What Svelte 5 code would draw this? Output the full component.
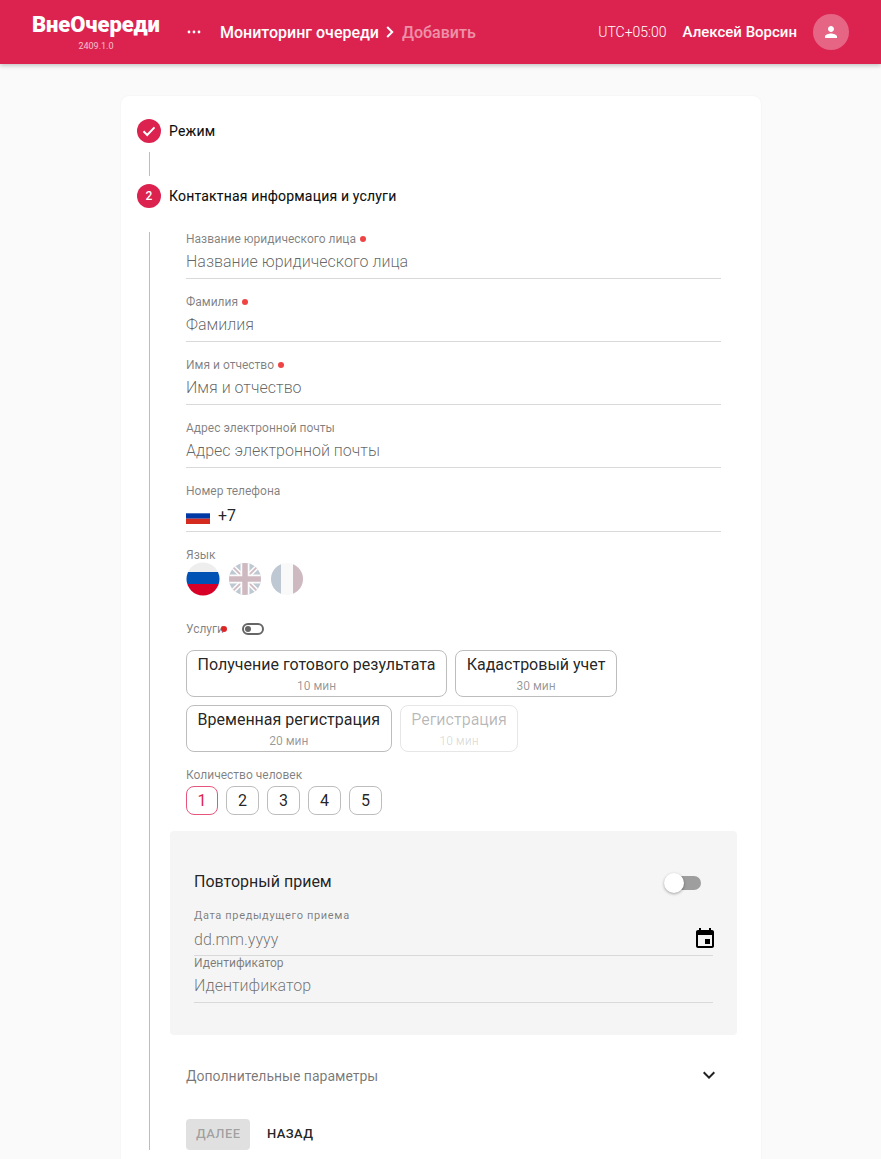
<script>
  const fields = [
    { label: 'Название юридического лица', required: true },
    { label: 'Фамилия', required: true },
    { label: 'Имя и отчество', required: true },
    { label: 'Адрес электронной почты', required: false },
  ];
  const services = [
    [
      { name: 'Получение готового результата', time: '10 мин' },
      { name: 'Кадастровый учет', time: '30 мин' },
    ],
    [
      { name: 'Временная регистрация', time: '20 мин' },
      { name: 'Регистрация', time: '10 мин', disabled: true },
    ],
  ];
  const counts = [1, 2, 3, 4, 5];
</script>

<header class="topbar">
  <div class="brand">
    <div class="logo">ВнеОчереди</div>
    <div class="version">2409.1.0</div>
  </div>
  <span class="dots">
    <svg width="14" height="4" viewBox="0 0 14 4"><circle cx="2" cy="2" r="1.4" fill="#fff"/><circle cx="7" cy="2" r="1.4" fill="#fff"/><circle cx="12" cy="2" r="1.4" fill="#fff"/></svg>
  </span>
  <span class="crumb">Мониторинг очереди</span>
  <svg class="crumb-sep" width="8" height="12" viewBox="0 0 8 12" fill="none"><path d="M1.2 1 6.200 6l-5 5" stroke="#fff" stroke-width="2"/></svg>
  <span class="crumb crumb-dim">Добавить</span>
  <span class="spacer"></span>
  <span class="tz">UTC+05:00</span>
  <span class="user">Алексей Ворсин</span>
  <span class="avatar">
    <svg width="18" height="18" viewBox="0 0 24 24" fill="#fff"><path d="M12 12c2.200 0 4-1.800 4-4s-1.800-4-4-4-4 1.800-4 4 1.800 4 4 4zm0 2c-2.700 0-8 1.300-8 4v2h16v-2c0-2.700-5.300-4-8-4z"/></svg>
  </span>
</header>

<main class="page">
  <section class="card">
    <div class="step">
      <span class="bullet">
        <svg width="16" height="16" viewBox="0 0 16 16" fill="none"><path d="M2.500 8.300 6.200 12l7.300-7.600" stroke="#fff" stroke-width="2"/></svg>
      </span>
      <span class="step-title">Режим</span>
    </div>
    <div class="connector"></div>
    <div class="step">
      <span class="bullet">2</span>
      <span class="step-title">Контактная информация и услуги</span>
    </div>

    <div class="step-body">
      {#each fields as f}
        <div class="field">
          <div class="label">{f.label}{#if f.required}<i class="req"></i>{/if}</div>
          <div class="placeholder">{f.label}</div>
        </div>
      {/each}

      <div class="field phone-field">
        <div class="label">Номер телефона</div>
        <div class="phone">
          <svg width="24" height="16" viewBox="0 0 24 16"><rect width="24" height="5.300" fill="#fff"/><rect y="5.300" width="24" height="5.400" fill="#0039a6"/><rect y="10.700" width="24" height="5.300" fill="#d52b1e"/></svg>
          <span>+7</span>
        </div>
      </div>

      <div class="label lang-label">Язык</div>
      <div class="langs">
        <svg class="flag" width="34" height="34" viewBox="0 0 34 34">
          <clipPath id="c1"><circle cx="17" cy="17" r="16.500"/></clipPath>
          <g clip-path="url(#c1)"><rect width="34" height="34" fill="#eeeeee"/><rect y="10" width="34" height="12" fill="#0052b4"/><rect y="22" width="34" height="12" fill="#d80027"/></g>
        </svg>
        <svg class="flag dim" width="34" height="34" viewBox="0 0 34 34">
          <clipPath id="c2"><circle cx="17" cy="17" r="16"/></clipPath>
          <g clip-path="url(#c2)">
            <rect width="34" height="34" fill="#2a4b6c"/>
            <path d="M0 0 34 34M34 0 0 34" stroke="#f4f4f4" stroke-width="5"/>
            <path d="M0 0 34 34M34 0 0 34" stroke="#621c34" stroke-width="1.600"/>
            <path d="M17 0v34M0 17h34" stroke="#f4f4f4" stroke-width="9"/>
            <path d="M17 0v34M0 17h34" stroke="#621c34" stroke-width="5.500"/>
          </g>
        </svg>
        <svg class="flag dim" width="34" height="34" viewBox="0 0 34 34">
          <clipPath id="c3"><circle cx="17" cy="17" r="16"/></clipPath>
          <g clip-path="url(#c3)"><rect width="34" height="34" fill="#eee"/><rect width="11" height="34" fill="#2a4b6c"/><rect x="23" width="11" height="34" fill="#621c34"/></g>
        </svg>
      </div>

      <div class="services-head">
        <span class="label services-label">Услуги<i class="req tight"></i></span>
        <span class="mini-toggle"><i></i></span>
      </div>

      {#each services as row}
        <div class="chips">
          {#each row as s}
            <div class="chip" class:disabled={s.disabled}>
              <div class="chip-name">{s.name}</div>
              <div class="chip-time">{s.time}</div>
            </div>
          {/each}
        </div>
      {/each}

      <div class="label count-label">Количество человек</div>
      <div class="counts">
        {#each counts as n}
          <span class="count" class:active={n === 1}>{n}</span>
        {/each}
      </div>

      <div class="panel">
        <div class="panel-row">
          <span class="panel-title">Повторный прием</span>
          <span class="switch"><i></i></span>
        </div>
        <div class="panel-field">
          <div class="label">Дата предыдущего приема</div>
          <div class="date-row">
            <span class="placeholder-text">dd.mm.yyyy</span>
            <svg class="cal" width="24" height="24" viewBox="0 0 24 24" fill="#000"><path d="M17 12h-5v5h5v-5zM16 1v2H8V1H6v2H5c-1.100 0-2 .9-2 2v14c0 1.100.9 2 2 2h14c1.100 0 2-.9 2-2V5c0-1.100-.9-2-2-2h-1V1h-2zm3 18H5V8h14v11z"/></svg>
          </div>
        </div>
        <div class="panel-field id-field">
          <div class="label">Идентификатор</div>
          <div class="placeholder-text id-text">Идентификатор</div>
        </div>
      </div>

      <div class="more">
        <span>Дополнительные параметры</span>
        <svg width="24" height="24" viewBox="0 0 24 24" fill="#212121"><path d="M7.400 7.600 12 12.200l4.600-4.600L18 9l-6 6-6-6z"/></svg>
      </div>

      <div class="actions">
        <button class="btn btn-next" disabled>Далее</button>
        <button class="btn btn-back">Назад</button>
      </div>
    </div>
  </section>
</main>

<style>
  :global(body) {
    background: #fafafa;
    font-family: Roboto, "Noto Sans", sans-serif;
    overflow: hidden;
  }

  .topbar {
    height: 64px;
    box-sizing: border-box;
    background: #dc2350;
    color: #fff;
    display: flex;
    align-items: center;
    padding: 0 32px;
    box-shadow: 0 2px 4px rgba(0, 0, 0, 0.2);
    position: relative;
  }

  .brand {
    width: 128px;
    text-align: center;
    margin-right: 27px;
    padding-top: 1px;
  }

  .logo {
    font-size: 22px;
    font-weight: 900;
    line-height: 24px;
    letter-spacing: -0.1px;
    text-align: left;
  }

  .version {
    font-size: 9px;
    line-height: 11px;
    margin-top: 4px;
    opacity: 0.7;
  }

  .dots {
    display: flex;
    margin-right: 19px;
  }

  .crumb {
    font-size: 16px;
    font-weight: 500;
  }

  .crumb-sep {
    margin: 0 8px 0 7px;
  }

  .crumb-dim {
    opacity: 0.5;
  }

  .spacer {
    flex: 1;
  }

  .tz {
    font-size: 14px;
    font-weight: 300;
    margin-right: 16px;
  }

  .user {
    font-size: 15px;
    font-weight: 500;
    margin-right: 16px;
  }

  .avatar {
    width: 36px;
    height: 36px;
    border-radius: 50%;
    background: rgba(255, 255, 255, 0.3);
    display: flex;
    align-items: center;
    justify-content: center;
  }

  .page {
    padding: 32px 120px 0 121px;
  }

  .card {
    background: #fff;
    border-radius: 8px;
    padding: 23px 16px 0;
    box-shadow: 0 0 2px rgba(0, 0, 0, 0.06);
    height: 1100px;
    box-sizing: border-box;
  }

  .step {
    display: flex;
    align-items: center;
    gap: 8px;
    height: 24px;
  }

  .bullet {
    width: 24px;
    height: 24px;
    border-radius: 50%;
    background: #dc2350;
    color: #fff;
    font-size: 12px;
    font-weight: 500;
    display: flex;
    align-items: center;
    justify-content: center;
  }

  .step-title {
    font-size: 14px;
    font-weight: 400;
    letter-spacing: 0.18px;
    color: rgba(0, 0, 0, 0.95);
    -webkit-text-stroke: 0.2px rgba(0, 0, 0, 0.6);
  }

  .connector {
    width: 1px;
    height: 24px;
    margin: 9px 0 8px 12px;
    background: #bdbdbd;
  }

  .step-body {
    margin: 24px 0 0 12px;
    padding: 0 24px 9px 36px;
    border-left: 1px solid #bdbdbd;
    height: 918px;
    box-sizing: border-box;
  }

  .field {
    height: 46px;
    margin-bottom: 16px;
    border-bottom: 1px solid #d9d9d9;
    box-sizing: content-box;
    margin-top: 0;
  }

  .phone-field {
    height: 47px;
  }

  .label {
    font-size: 12px;
    line-height: 14px;
    color: rgba(0, 0, 0, 0.5);
    display: flex;
    align-items: center;
  }

  .req {
    width: 6px;
    height: 6px;
    border-radius: 50%;
    background: #ef4444;
    margin-left: 4px;
  }

  .placeholder {
    font-size: 16px;
    font-weight: 300;
    line-height: 24px;
    margin-top: 4px;
    color: rgba(0, 0, 0, 0.62);
  }

  .phone {
    display: flex;
    align-items: center;
    gap: 8px;
    font-size: 16px;
    line-height: 24px;
    margin-top: 6px;
    font-weight: 400;
    color: rgba(0, 0, 0, 0.87);
  }

  .lang-label {
    margin-top: 1px;
  }

  .langs {
    display: flex;
    gap: 8px;
    margin-top: 0;
  }

  .flag {
    display: block;
  }

  .flag.dim {
    opacity: 0.3;
  }

  .services-head {
    display: flex;
    align-items: center;
    margin-top: 21px;
    height: 24px;
  }

  .services-label {
    width: 56px;
  }

  .req.tight {
    margin-left: -3px;
    background: #dc2626;
  }

  .mini-toggle {
    width: 22px;
    height: 12px;
    box-sizing: border-box;
    border: 2px solid #666;
    border-radius: 6px;
    display: flex;
    align-items: center;
    padding-left: 1px;
  }

  .mini-toggle i {
    width: 6px;
    height: 6px;
    border-radius: 50%;
    background: #666;
  }

  .chips {
    display: flex;
    gap: 8px;
    margin-top: 8px;
  }

  .services-head + .chips {
    margin-top: 9px;
  }

  .chip {
    border: 1px solid #bdbdbd;
    border-radius: 8px;
    height: 47px;
    box-sizing: border-box;
    padding: 0 10.600px;
    text-align: center;
  }

  .chip-name {
    font-size: 16px;
    line-height: 24px;
    margin-top: 2px;
    color: rgba(0, 0, 0, 0.87);
  }

  .chip-time {
    font-size: 12px;
    line-height: 14px;
    margin-top: 2px;
    color: rgba(0, 0, 0, 0.42);
  }

  .chip.disabled {
    border-color: #e6e6e6;
  }

  .chip.disabled .chip-name {
    color: rgba(0, 0, 0, 0.28);
  }

  .chip.disabled .chip-time {
    color: rgba(0, 0, 0, 0.15);
  }

  .count-label {
    margin-top: 16px;
  }

  .counts {
    display: flex;
    gap: 8px;
    margin-top: 4px;
  }

  .count {
    width: 33px;
    height: 29px;
    box-sizing: border-box;
    border: 1px solid #bdbdbd;
    border-radius: 8px;
    font-size: 16px;
    display: flex;
    align-items: center;
    justify-content: center;
    color: rgba(0, 0, 0, 0.87);
  }

  .count.active {
    width: 32px;
    border-color: #e8557c;
    color: #dc2350;
  }

  .panel {
    margin: 16px -16px 0 -16px;
    padding: 40px 24px 0;
    height: 204px;
    box-sizing: border-box;
    background: #f5f5f5;
    border-radius: 4px;
  }

  .panel-row {
    display: flex;
    align-items: center;
    justify-content: space-between;
    height: 24px;
    padding-right: 12px;
  }

  .panel-title {
    font-size: 16px;
    line-height: 22px;
    margin-bottom: 2px;
    color: rgba(0, 0, 0, 0.87);
  }

  .switch {
    width: 36px;
    height: 14px;
    border-radius: 7px;
    background: #9e9e9e;
    position: relative;
  }

  .switch i {
    position: absolute;
    left: -1px;
    top: -3px;
    width: 20px;
    height: 20px;
    border-radius: 50%;
    background: #fff;
    box-shadow: 0 1px 3px rgba(0, 0, 0, 0.35);
  }

  .panel-field {
    border-bottom: 1px solid #d9d9d9;
    margin-top: 14px;
    height: 46px;
  }

  .panel-field .label {
    font-size: 11px;
    letter-spacing: 0.65px;
  }

  .date-row {
    display: flex;
    align-items: center;
    justify-content: space-between;
    height: 28px;
    margin-top: 2px;
  }

  .cal {
    margin-right: -4px;
  }

  .placeholder-text {
    font-size: 16px;
    font-weight: 300;
    color: rgba(0, 0, 0, 0.55);
  }

  .id-field {
    margin-top: 0;
    height: 46px;
  }

  .id-field .label {
    font-size: 12px;
    letter-spacing: 0;
  }

  .id-text {
    line-height: 24px;
    margin-top: 4px;
  }

  .more {
    display: flex;
    align-items: center;
    justify-content: space-between;
    height: 24px;
    margin-top: 29px;
    font-size: 14px;
    color: rgba(0, 0, 0, 0.54);
  }

  .actions {
    display: flex;
    gap: 0;
    margin-top: 31px;
  }

  .btn {
    height: 31px;
    border: none;
    border-radius: 4px;
    font-family: inherit;
    font-size: 13px;
    font-weight: 500;
    letter-spacing: 0.4px;
    text-transform: uppercase;
    padding: 0 10px 2px;
    background: transparent;
    color: rgba(0, 0, 0, 0.87);
  }

  .btn-next {
    width: 64px;
    background: #e0e0e0;
    color: rgba(0, 0, 0, 0.3);
    margin-right: 7px;
  }
</style>
